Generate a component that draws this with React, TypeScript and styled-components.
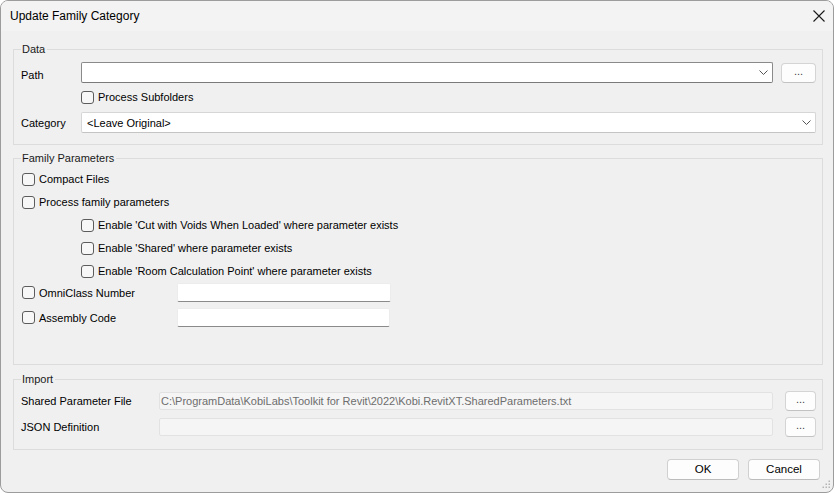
import * as React from "react";
import styled, { createGlobalStyle } from "styled-components";

const GlobalStyle = createGlobalStyle`
  html, body {
    margin: 0;
    padding: 0;
    background: #ffffff;
  }
  body {
    font-family: "Liberation Sans", Arial, sans-serif;
    font-size: 11px;
    color: #000000;
  }
  * {
    box-sizing: border-box;
  }
`;

const Window = styled.div`
  position: relative;
  width: 834px;
  height: 493px;
  border: 1px solid #9c9c9c;
  border-radius: 8px;
  background: #f0f0f0;
  display: flex;
  flex-direction: column;
  overflow: hidden;
`;

const TitleBar = styled.div`
  height: 30px;
  display: flex;
  align-items: center;
  justify-content: space-between;
  padding: 0 8px 0 9px;
  background: #f3f3f3;
  font-size: 12px;
  line-height: 16px;
`;

const CloseIcon = styled.svg`
  width: 12px;
  height: 12px;
  margin-top: -1px;
`;

const Body = styled.div`
  flex: 1;
  display: flex;
  flex-direction: column;
  padding: 10px 10px 0 12px;
`;

const Group = styled.fieldset<{ $top: number; $pt: number; $pb: number }>`
  margin: ${(p) => p.$top}px 0 0 0;
  padding: ${(p) => p.$pt}px 6px ${(p) => p.$pb}px 7px;
  border: 1px solid #dcdcdc;
  min-width: 0;
  display: flex;
  flex-direction: column;
`;

const Legend = styled.legend`
  padding: 0 2px 0 1px;
  line-height: 16px;
  font-size: 11px;
  color: #1a1a1a;
`;

const Row = styled.div<{ $h: number; $mt?: number; $indent?: number }>`
  display: flex;
  align-items: center;
  height: ${(p) => p.$h}px;
  margin-top: ${(p) => p.$mt ?? 0}px;
  padding-left: ${(p) => p.$indent ?? 0}px;
`;

const FieldLabel = styled.span<{ $w: number; $drop?: number }>`
  width: ${(p) => p.$w}px;
  flex: none;
  padding-top: ${(p) => p.$drop ?? 0}px;
  white-space: nowrap;
`;

const Combo = styled.div<{ $dark?: boolean }>`
  flex: 1;
  height: 21px;
  display: flex;
  align-items: center;
  justify-content: space-between;
  padding: 0 4px 0 5px;
  background: #ffffff;
  border: 1px solid ${(p) => (p.$dark ? "#8a8a8a" : "#d6d6d6")};
  border-bottom-color: ${(p) => (p.$dark ? "#7a7a7a" : "#c4c4c4")};
  border-radius: 2px;
  white-space: nowrap;
`;

const Chevron = styled.svg`
  width: 9px;
  height: 5px;
  flex: none;
`;

const DotsButton = styled.button<{ $ml: number; $w: number }>`
  width: ${(p) => p.$w}px;
  height: 20px;
  margin-left: ${(p) => p.$ml}px;
  flex: none;
  padding: 0 0 4px 0;
  font-family: inherit;
  font-size: 11px;
  line-height: 10px;
  color: #444444;
  background: #fdfdfd;
  border: 1px solid #d4d4d4;
  border-bottom-color: #c2c2c2;
  border-radius: 4px;
`;

const Box = styled.span`
  width: 13px;
  height: 13px;
  flex: none;
  margin: 0 4px 0 1px;
  border: 1px solid #5c5c5c;
  border-radius: 3px;
  background: #f7f7f7;
`;

const TextBox = styled.div<{ $w: number }>`
  width: ${(p) => p.$w}px;
  height: 19px;
  margin-left: auto;
  background: #ffffff;
  border: 1px solid #ececec;
  border-bottom: 1px solid #8a8a8a;
  border-radius: 2px;
`;

const PathBox = styled.div`
  flex: 1;
  height: 18px;
  padding: 0 0 0 1px;
  display: flex;
  align-items: center;
  background: #f5f5f5;
  border: 1px solid #e2e2e2;
  border-radius: 2px;
  color: #6d6d6d;
  white-space: nowrap;
  overflow: hidden;
`;

const Footer = styled.div`
  display: flex;
  justify-content: flex-end;
  gap: 9px;
  padding: 7px 13px 12px 0;
`;

const DialogButton = styled.button`
  width: 72px;
  height: 21px;
  padding: 0 0 1px 0;
  font-family: inherit;
  font-size: 11.5px;
  color: #000000;
  background: #fdfdfd;
  border: 1px solid #d0d0d0;
  border-bottom-color: #bcbcbc;
  border-radius: 4px;
`;

const Grip = styled.svg`
  position: absolute;
  right: 2px;
  bottom: 3px;
  width: 9px;
  height: 9px;
`;

const ChevronDown = () => (
  <Chevron viewBox="0 0 9 5">
    <path d="M0.5 0.5 L4.5 4.5 L8.5 0.5" fill="none" stroke="#555" strokeWidth="1" />
  </Chevron>
);

const CheckItem: React.FC<{ label: string; indent?: number; mt?: number }> = ({
  label,
  indent,
  mt,
}) => (
  <Row $h={18} $mt={mt} $indent={indent}>
    <Box />
    <span>{label}</span>
  </Row>
);

const App: React.FC = () => {
  return (
    <>
      <GlobalStyle />
      <Window>
        <TitleBar>
          <span>Update Family Category</span>
          <CloseIcon viewBox="0 0 12 12">
            <path d="M0.5 0.5 L11.5 11.5 M11.5 0.5 L0.5 11.5" stroke="#1a1a1a" strokeWidth="1.1" />
          </CloseIcon>
        </TitleBar>
        <Body>
          <Group $top={0} $pt={5} $pb={11}>
            <Legend>Data</Legend>
            <Row $h={21}>
              <FieldLabel $w={60} $drop={4}>
                Path
              </FieldLabel>
              <Combo $dark>
                <span />
                <ChevronDown />
              </Combo>
              <DotsButton $ml={8} $w={35}>
                ...
              </DotsButton>
            </Row>
            <CheckItem label="Process Subfolders" indent={59} mt={5} />
            <Row $h={21} $mt={6}>
              <FieldLabel $w={60}>Category</FieldLabel>
              <Combo>
                <span>&lt;Leave Original&gt;</span>
                <ChevronDown />
              </Combo>
            </Row>
          </Group>

          <Group $top={5} $pt={4} $pb={37}>
            <Legend>Family Parameters</Legend>
            <CheckItem label="Compact Files" />
            <CheckItem label="Process family parameters" mt={5} />
            <CheckItem label="Enable 'Cut with Voids When Loaded' where parameter exists" indent={59} mt={5} />
            <CheckItem label="Enable 'Shared' where parameter exists" indent={59} mt={5} />
            <CheckItem label="Enable 'Room Calculation Point' where parameter exists" indent={59} mt={5} />
            <Row $h={19} $mt={3} style={{ width: 370 }}>
              <Box />
              <span>OmniClass Number</span>
              <TextBox $w={214} />
            </Row>
            <Row $h={19} $mt={6} style={{ width: 369 }}>
              <Box />
              <span>Assembly Code</span>
              <TextBox $w={213} />
            </Row>
          </Group>

          <Group $top={6} $pt={4} $pb={12}>
            <Legend>Import</Legend>
            <Row $h={20}>
              <FieldLabel $w={138}>Shared Parameter File</FieldLabel>
              <PathBox>C:\ProgramData\KobiLabs\Toolkit for Revit\2022\Kobi.RevitXT.SharedParameters.txt</PathBox>
              <DotsButton $ml={12} $w={31}>
                ...
              </DotsButton>
            </Row>
            <Row $h={20} $mt={6}>
              <FieldLabel $w={138}>JSON Definition</FieldLabel>
              <PathBox />
              <DotsButton $ml={12} $w={31}>
                ...
              </DotsButton>
            </Row>
          </Group>
        </Body>
        <Footer>
          <DialogButton>OK</DialogButton>
          <DialogButton>Cancel</DialogButton>
        </Footer>
        <Grip viewBox="0 0 9 9">
          {[
            [7, 1],
            [4, 4],
            [7, 4],
            [1, 7],
            [4, 7],
            [7, 7],
          ].map(([x, y]) => (
            <rect key={`${x}-${y}`} x={x - 0.5} y={y - 0.5} width="1.5" height="1.5" fill="#b5b5b5" />
          ))}
        </Grip>
      </Window>
    </>
  );
};

export default App;
